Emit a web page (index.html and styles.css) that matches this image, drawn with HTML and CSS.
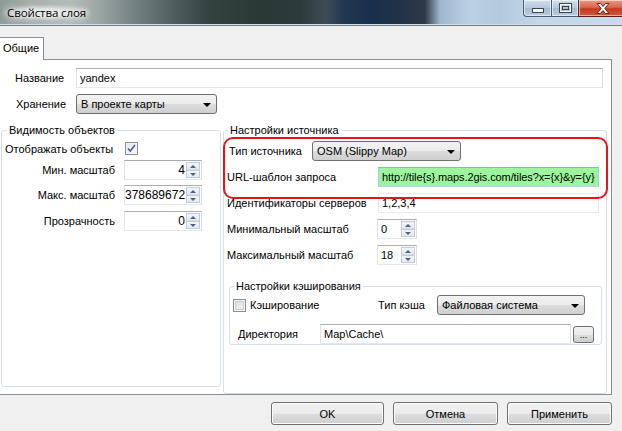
FILE: index.html
```html
<!DOCTYPE html>
<html lang="ru">
<head>
<meta charset="utf-8">
<title>Свойства слоя</title>
<link rel="stylesheet" href="styles.css">
</head>
<body>
<div class="window">
  <div class="titlebar">
    <span class="title">Свойства слоя</span>
    <div class="caption-buttons">
      <span class="cbtn cmin"><svg width="12" height="5" viewBox="0 0 12 5"><rect x="0.5" y="0.5" width="11" height="4" fill="#fff" stroke="#3a4658"/></svg></span>
      <span class="cbtn cmax"><svg width="13" height="10" viewBox="0 0 13 10"><rect x="0.5" y="0.5" width="12" height="9" fill="none" stroke="#3a4658"/><rect x="1.5" y="1.5" width="10" height="7" fill="none" stroke="#fff"/><rect x="3.5" y="3.5" width="6" height="3" fill="none" stroke="#3a4658"/></svg></span>
      <span class="cbtn cclose"><svg width="14" height="11" viewBox="0 0 14 11"><path d="M1 0.5h3.5l2.5 3 2.5-3h3.5l-4.2 5 4.2 5h-3.5l-2.5-3-2.5 3h-3.5l4.2-5z" fill="#fff" stroke="#5c1a10" stroke-width="0.9"/></svg></span>
    </div>
  </div>
  <div class="client">
    <div class="tabstrip"><div class="tab">Общие</div></div>
    <div class="tabpanel">
      <div class="row row-name">
        <span class="lbl lbl-top">Название</span>
        <div class="textbox tb-name">yandex</div>
      </div>
      <div class="row row-store">
        <span class="lbl lbl-top lbl-store">Хранение</span>
        <div class="combo combo-store"><span>В проекте карты</span><i class="arrow"></i></div>
      </div>
      <div class="groups">
        <fieldset class="group group-vis">
          <legend>Видимость объектов</legend>
          <div class="vis-body">
            <div class="vis-check">
              <span>Отображать объекты</span>
              <span class="checkbox checked"><svg width="9" height="9" viewBox="0 0 9 9"><path d="M1 4.5l2.3 2.6L8 1" fill="none" stroke="#4a5f97" stroke-width="1.6"/></svg></span>
            </div>
            <div class="vis-row">
              <span class="lbl-r">Мин. масштаб</span>
              <div class="spin spin-l"><span class="val val-r">4</span><span class="spin-btns"><span class="sb up"></span><span class="sb down"></span></span></div>
            </div>
            <div class="vis-row">
              <span class="lbl-r">Макс. масштаб</span>
              <div class="spin spin-l"><span class="val val-r">378689672</span><span class="spin-btns"><span class="sb up"></span><span class="sb down"></span></span></div>
            </div>
            <div class="vis-row vis-row-last">
              <span class="lbl-r">Прозрачность</span>
              <div class="spin spin-l"><span class="val val-r">0</span><span class="spin-btns"><span class="sb up"></span><span class="sb down"></span></span></div>
            </div>
          </div>
        </fieldset>
        <fieldset class="group group-src">
          <legend>Настройки источника</legend>
          <div class="src-body">
            <div class="highlight">
              <div class="src-row">
                <span class="lbl-type">Тип источника</span>
                <div class="combo combo-type"><span>OSM (Slippy Map)</span><i class="arrow"></i></div>
              </div>
              <div class="src-row">
                <span class="lbl-src">URL-шаблон запроса</span>
                <div class="textbox tb-src tb-green">http://tile{s}.maps.2gis.com/tiles?x={x}&amp;y={y}</div>
              </div>
            </div>
            <div class="src-row">
              <span class="lbl-src">Идентификаторы серверов</span>
              <div class="textbox tb-src tb-flat">1,2,3,4</div>
            </div>
            <div class="src-row">
              <span class="lbl-src">Минимальный масштаб</span>
              <div class="spin spin-s"><span class="val">0</span><span class="spin-btns"><span class="sb up"></span><span class="sb down"></span></span></div>
            </div>
            <div class="src-row">
              <span class="lbl-src">Максимальный масштаб</span>
              <div class="spin spin-s"><span class="val">18</span><span class="spin-btns"><span class="sb up"></span><span class="sb down"></span></span></div>
            </div>
            <fieldset class="group group-cache">
              <legend>Настройки кэширования</legend>
              <div class="cache-row">
                <span class="checkbox"></span>
                <span class="lbl-cache">Кэширование</span>
                <span class="lbl-ctype">Тип кэша</span>
                <div class="combo combo-cache"><span>Файловая система</span><i class="arrow"></i></div>
              </div>
              <div class="cache-row dir-row">
                <span class="lbl-dir">Директория</span>
                <div class="textbox tb-dir">Map\Cache\</div>
                <span class="btn-browse">...</span>
              </div>
            </fieldset>
          </div>
        </fieldset>
      </div>
    </div>
    <div class="buttons">
      <span class="btn btn-ok">OK</span>
      <span class="btn">Отмена</span>
      <span class="btn">Применить</span>
    </div>
  </div>
</div>
</body>
</html>
```
FILE: styles.css
```css
* { box-sizing: border-box; }
html, body { margin: 0; padding: 0; }
body {
  width: 622px;
  height: 431px;
  overflow: hidden;
  background: #f0f0f0;
  font-family: "Liberation Sans", Arial, sans-serif;
  font-size: 11px;
  font-weight: normal;
  color: #000;
}
.window { width: 622px; height: 431px; overflow: hidden; }

/* ---------- title bar ---------- */
.titlebar {
  height: 26px;
  display: flex;
  justify-content: space-between;
  align-items: flex-start;
  border-bottom: 1px solid #6f7b86;
  box-shadow: inset 0 -1px 0 #d7dde2;
  background:
    linear-gradient(90deg,
      #8e9a97 0px, #a6b0ad 30px, #b4bcb8 70px, #9aa5a3 100px,
      #6e7c7c 140px, #4d5c5e 175px, #33413f 210px, #2a3836 260px,
      #2c3a3c 300px, #3e4d55 325px, #213650 345px, #17304f 370px,
      #223247 400px, #2d3a48 425px, #9fb7cf 440px, #bcd0e4 470px,
      #b5c9de 500px, #c4d7ea 540px, #c9dbed 622px);
}
.title {
  margin: 5px 0 0 3px;
  font-family: "Open Sans", "Noto Sans", sans-serif;
  font-size: 11.5px;
  letter-spacing: -0.1px;
  color: #000;
  padding: 0 4px;
  text-shadow: 0 0 6px #fff, 0 0 8px #fff, 0 0 10px #fff;
  background: radial-gradient(ellipse at center, rgba(230,234,232,0.85) 30%, rgba(230,234,232,0) 75%);
}
.caption-buttons {
  display: flex;
  height: 17px;
  margin-right: -3px;
}
.cbtn {
  display: flex;
  align-items: center;
  justify-content: center;
  height: 17px;
  border: 1px solid #4e5c70;
  border-top: none;
  box-shadow: inset 0 0 0 1px rgba(255,255,255,0.55);
}
.cmin {
  width: 28px;
  border-bottom-left-radius: 4px;
  border-right: none;
  background: linear-gradient(#d2deec, #b7c8dc 50%, #a6bad2 51%, #bccce0);
  padding-top: 4px;
}
.cmax {
  width: 27px;
  border-right: none;
  background: linear-gradient(#d2deec, #b7c8dc 50%, #a6bad2 51%, #bccce0);
}
.cclose {
  width: 47px;
  background: linear-gradient(#e69b84, #d8694b 45%, #c6391c 55%, #d2563a);
  border-color: #5c1f15;
  justify-content: flex-start;
  padding-left: 17px;
}

/* ---------- client ---------- */
.client { padding: 11px 10px 0 0; }
.tabstrip { height: 22px; display: flex; }
.tab {
  position: relative;
  z-index: 1;
  margin-left: -1px;
  width: 45px;
  height: 23px;
  padding: 4px 0 0 3px;
  background: #fff;
  border: 1px solid #898c95;
  border-bottom: none;
}
.tabpanel {
  margin-left: -2px;
  width: 614px;
  height: 336px;
  background: #fff;
  border: 1px solid #898c95;
  display: flex;
  flex-direction: column;
}

.row { display: flex; align-items: center; }
.row-name { margin-top: 8px; }
.row-store { margin-top: 6px; }
.lbl-top { margin-left: 16px; width: 61px; }
.lbl-store { margin-left: 17px; width: 60px; }

/* ---------- inputs ---------- */
.textbox {
  height: 20px;
  padding: 0 3px;
  line-height: 18px;
  border: 1px solid;
  border-color: #abadb3 #dbdfe6 #e3e9ef #e2e3ea;
  background: #fff;
  white-space: nowrap;
  overflow: hidden;
}
.tb-name { width: 527px; }

.combo {
  height: 20px;
  display: flex;
  align-items: center;
  justify-content: space-between;
  padding: 0 5px 0 4px;
  border: 1px solid #707070;
  border-radius: 3px;
  background: linear-gradient(#f2f2f2, #ebebeb 50%, #dddddd 51%, #cfcfcf);
  white-space: nowrap;
}
.combo .arrow {
  width: 0; height: 0;
  border-left: 4px solid transparent;
  border-right: 4px solid transparent;
  border-top: 4px solid #000;
  margin-top: 1px;
}
.combo-store { width: 141px; }

.spin {
  height: 20px;
  display: flex;
  align-items: stretch;
  border: 1px solid;
  border-color: #abadb3 #dbdfe6 #e3e9ef #e2e3ea;
  background: #fff;
}
.spin .val { flex: 1; line-height: 18px; padding-left: 3px; white-space: nowrap; overflow: hidden; }
.spin .val-r { text-align: right; padding: 0 1px 0 0; font-size: 12px; }
.spin-btns { width: 15px; display: flex; flex-direction: column; padding: 1px 1px 1px 0; }
.sb {
  flex: 1;
  display: flex;
  align-items: center;
  justify-content: center;
  border: 1px solid #c3ccd8;
  background: linear-gradient(#f3f6fa, #e3e9f1);
}
.sb.up { border-bottom-color: #d5dce6; }
.sb::after {
  content: "";
  width: 0; height: 0;
  border-left: 3px solid transparent;
  border-right: 3px solid transparent;
}
.sb.up::after { border-bottom: 3px solid #4d6185; }
.sb.down::after { border-top: 3px solid #4d6185; }
.spin-l { width: 78px; }
.spin-s { width: 40px; }

.checkbox {
  width: 13px;
  height: 13px;
  border: 1px solid #8e8f8f;
  background: linear-gradient(135deg, #dcdcdc, #f6f6f6);
  box-shadow: inset 0 0 0 1px #f4f4f4, inset 0 0 0 2px #c8cdd2;
  display: flex;
  align-items: center;
  justify-content: center;
}
.checkbox.checked { box-shadow: inset 0 0 0 1px #f4f4f4; background: linear-gradient(135deg, #e2e6ee, #f8f9fb); }

/* ---------- groups ---------- */
.groups {
  display: flex;
  margin-top: 10px;
  flex: 1;
  padding-left: 2px;
  padding-right: 4px;
  gap: 2px;
}
.group {
  margin: 0;
  padding: 0;
  min-width: 0;
  border: 1px solid #d5dfe5;
  border-radius: 3px;
}
.group legend {
  padding: 0 2px;
  line-height: 13px;
  margin-left: 5px;
}
.group-vis {
  width: 220px;
  height: 263px;
  align-self: flex-start;
  box-shadow: inset 0 0 0 1px #fff;
}
.group-src { flex: 1; }
.group-src > legend { margin-left: 4px; }

.vis-body { padding: 5px 0 0 3px; }
.vis-check {
  display: grid;
  grid-template-columns: 120px 13px;
  align-items: center;
  height: 13px;
}
.vis-row {
  display: grid;
  grid-template-columns: 110px 78px;
  column-gap: 9px;
  align-items: center;
  margin-top: 5px;
}
.vis-row-last { margin-top: 6px; }
.lbl-r { text-align: right; }

.src-body { padding: 4px 0 0 0; display: flex; flex-direction: column; gap: 6px; }
.highlight {
  position: relative;
  display: flex;
  flex-direction: column;
  gap: 6px;
}
.highlight::before {
  content: "";
  position: absolute;
  left: -1px;
  top: -4px;
  width: 381px;
  height: 58px;
  border: 2px solid #e8141b;
  border-radius: 10px;
  z-index: 2;
  pointer-events: none;
}
.src-row { display: flex; align-items: center; padding-left: 3px; }
.lbl-type { margin-left: 2px; width: 83px; }
.combo-type { width: 149px; }
.lbl-src { width: 150px; }
.tb-src { width: 221px; margin-left: 1px; }
.tb-green { background: #9cf59c; border-color: #7eb4ea #a9c9e8 #b7d3ef #a9c9e8; letter-spacing: -0.1px; }
.tb-flat { border-color: #e8ecf0; }

.group-cache {
  margin: 9px 4px 10px 5px;
  flex: 1;
}
.group-cache > legend { margin-left: 4px; }
.cache-row { display: flex; align-items: center; padding-left: 3px; margin-top: 2px; }
.lbl-cache { margin-left: 4px; width: 128px; }
.lbl-ctype { width: 59px; }
.combo-cache { width: 148px; }
.dir-row { margin-top: 9px; padding-left: 8px; }
.lbl-dir { width: 82px; }
.tb-dir { width: 251px; }
.btn-browse {
  margin-left: 2px;
  width: 21px;
  height: 17px;
  border: 1px solid #707070;
  border-radius: 3px;
  background: linear-gradient(#f2f2f2, #ebebeb 50%, #dddddd 51%, #cfcfcf);
  font-size: 9px;
  text-align: center;
  line-height: 16px;
}

/* ---------- buttons ---------- */
.buttons {
  display: flex;
  justify-content: flex-end;
  gap: 9px;
  margin-top: 7px;
}
.btn {
  width: 105px;
  height: 23px;
  display: flex;
  align-items: center;
  justify-content: center;
  border: 1px solid #707070;
  border-radius: 3px;
  background: linear-gradient(#f2f2f2, #ebebeb 50%, #dddddd 51%, #cfcfcf);
  box-shadow: inset 0 0 0 1px #fcfcfc;
}
.btn-ok { width: 113px; }
```
